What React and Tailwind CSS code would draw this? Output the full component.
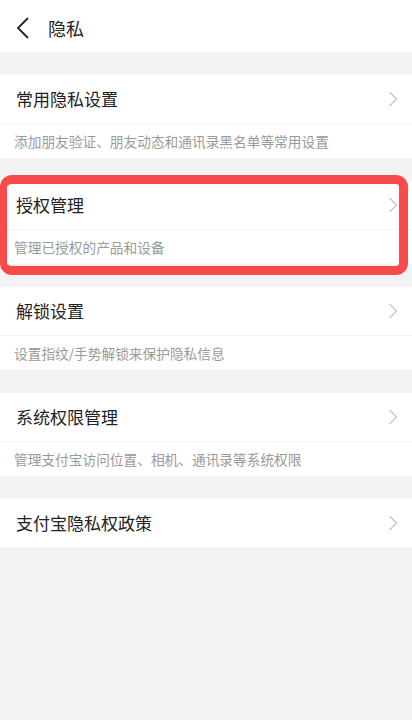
// privacy settings rows
const sections = [
  {
    title: "常用隐私设置",
    desc: "添加朋友验证、朋友动态和通讯录黑名单等常用设置",
  },
  { title: "授权管理", desc: "管理已授权的产品和设备", marked: true },
  { title: "解锁设置", desc: "设置指纹/手势解锁来保护隐私信息" },
  { title: "系统权限管理", desc: "管理支付宝访问位置、相机、通讯录等系统权限" },
  { title: "支付宝隐私权政策" },
];

const Arrow = () => (
  <svg width="10" height="16" viewBox="0 0 10 16" fill="none">
    <path d="M1.5 1 L8.5 8 L1.5 15" stroke="#c4c4c4" strokeWidth="1.2" />
  </svg>
);

const Back = () => (
  <svg width="14" height="22" viewBox="0 0 14 22" fill="none">
    <path d="M12 1 L2 11 L12 21" stroke="#222" strokeWidth="1.8" />
  </svg>
);

function Card({ title, desc, marked }) {
  return (
    <div className="relative bg-white">
      <div className="flex h-[48px] items-center justify-between pl-4 pr-[14px]">
        <span className="text-[17px] text-[#222]">{title}</span>
        <Arrow />
      </div>
      {desc && (
        <div className="flex h-[35px] items-center border-t border-[#f4f4f4] pl-[14px]">
          <span className="text-[13.7px] text-[#9a9a9a]">{desc}</span>
        </div>
      )}
      {marked && (
        <div className="pointer-events-none absolute top-[-6px] bottom-[-11px] left-0 right-[4px] rounded-[12px] border-[9px] border-l-[7px] border-[#f64b4a]" />
      )}
    </div>
  );
}

export default function App() {
  return (
    <div
      className="min-h-[720px] w-[412px] bg-[#f3f3f3]"
      style={{ fontFamily: '"Noto Sans CJK SC", "Noto Sans", sans-serif' }}
    >
      <header className="flex h-[52px] items-center bg-white pl-[16px] pt-[4px]">
        <Back />
        <span className="ml-[18px] text-[18px] text-[#222]">隐私</span>
      </header>
      <div className="flex flex-col gap-[23px] pt-[23px]">
        {sections.map((s, i) => (
          <Card key={i} {...s} />
        ))}
      </div>
    </div>
  );
}
